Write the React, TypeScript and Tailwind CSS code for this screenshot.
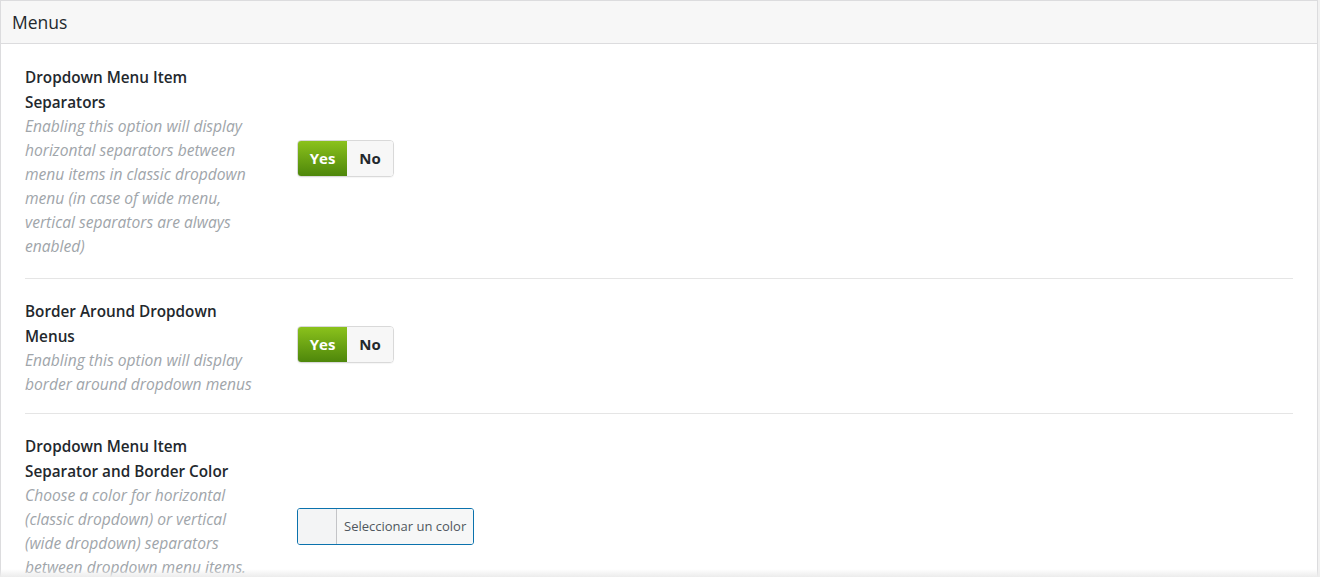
import React from "react";

const font = { fontFamily: '"Open Sans", "Noto Sans", sans-serif' };

const Toggle = ({ value }: { value: boolean }) => (
  <div className="flex h-[37px] w-[97px] rounded-[4px] overflow-hidden border border-[#d9d9d9] shadow-[0_1px_1px_rgba(0,0,0,0.04)]">
    <div
      className={
        value
          ? "flex w-[49px] items-center justify-center bg-gradient-to-b from-[#8bc21c] to-[#4e870b] text-[15px] font-bold text-white"
          : "flex w-[49px] items-center justify-center bg-[#f7f7f7] text-[15px] font-bold text-[#23282d]"
      }
    >
      Yes
    </div>
    <div
      className={
        value
          ? "flex flex-1 items-center justify-center bg-[#f7f7f7] text-[15px] font-bold text-[#23282d]"
          : "flex flex-1 items-center justify-center bg-gradient-to-b from-[#8bc21c] to-[#4e870b] text-[15px] font-bold text-white"
      }
    >
      No
    </div>
  </div>
);

const Label = ({ title, desc }: { title: string[]; desc: string[] }) => (
  <div className="w-[272px] shrink-0">
    {title.map((t, i) => (
      <div key={i} className="text-[15.3px] font-semibold leading-[24.5px] text-[#23282d] whitespace-nowrap">
        {t}
      </div>
    ))}
    {desc.map((d, i) => (
      <div key={i} className="text-[15.6px] italic leading-[24px] text-[#a0a5aa] whitespace-nowrap">
        {d}
      </div>
    ))}
  </div>
);

export default function App() {
  return (
    <div className="h-[577px] overflow-hidden bg-[#f1f1f1] relative" style={font}>
      <div className="w-[1318px] border border-[#dcdcde] bg-white">
        <div className="flex h-[43px] items-center border-b border-[#dcdcde] bg-[#f7f7f7] px-[11px]">
          <span className="text-[17.5px] text-[#23282d]">Menus</span>
        </div>

        <div className="px-[24px]">
          <div className="flex items-center border-b border-[#e5e5e5] pt-[21px] pb-[20px]">
            <Label
              title={["Dropdown Menu Item", "Separators"]}
              desc={[
                "Enabling this option will display",
                "horizontal separators between",
                "menu items in classic dropdown",
                "menu (in case of wide menu,",
                "vertical separators are always",
                "enabled)",
              ]}
            />
            <div className="-mt-[6px]">
              <Toggle value={true} />
            </div>
          </div>

          <div className="flex items-center border-b border-[#e5e5e5] pt-[20px] pb-[17px]">
            <Label
              title={["Border Around Dropdown", "Menus"]}
              desc={["Enabling this option will display", "border around dropdown menus"]}
            />
            <div className="-mt-[6px]">
              <Toggle value={true} />
            </div>
          </div>

          <div className="flex items-start pt-[20px] pb-[18px]">
            <Label
              title={["Dropdown Menu Item", "Separator and Border Color"]}
              desc={[
                "Choose a color for horizontal",
                "(classic dropdown) or vertical",
                "(wide dropdown) separators",
                "between dropdown menu items.",
              ]}
            />
            <div className="mt-[74px] flex h-[37px] w-[177px] overflow-hidden rounded-[3px] border border-[#0b72ad]">
              <div className="w-[39px] border-r border-[#c3c4c7] bg-[#f3f4f5]" />
              <div className="flex flex-1 items-center bg-[#f6f7f7] pl-[7px] text-[13px] text-[#50575e]">
                Seleccionar un color
              </div>
            </div>
          </div>
        </div>
      </div>
      <div className="pointer-events-none absolute bottom-0 left-0 h-[8px] w-full bg-gradient-to-b from-transparent to-[#ececec]" />
    </div>
  );
}
